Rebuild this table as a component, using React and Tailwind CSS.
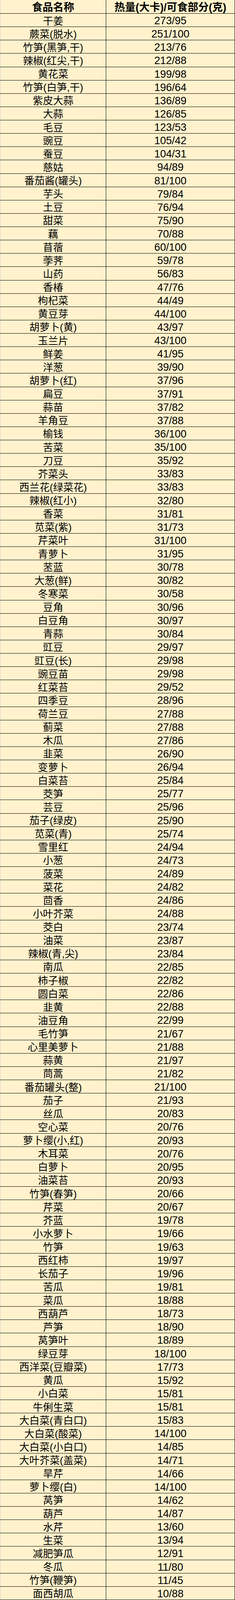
import React from "react";

const rows = [
  ["干姜", "273/95"],
  ["蕨菜(脱水)", "251/100"],
  ["竹笋(黑笋,干)", "213/76"],
  ["辣椒(红尖,干)", "212/88"],
  ["黄花菜", "199/98"],
  ["竹笋(白笋,干)", "196/64"],
  ["紫皮大蒜", "136/89"],
  ["大蒜", "126/85"],
  ["毛豆", "123/53"],
  ["豌豆", "105/42"],
  ["蚕豆", "104/31"],
  ["慈姑", "94/89"],
  ["番茄酱(罐头)", "81/100"],
  ["芋头", "79/84"],
  ["土豆", "76/94"],
  ["甜菜", "75/90"],
  ["藕", "70/88"],
  ["苜蓿", "60/100"],
  ["荸荠", "59/78"],
  ["山药", "56/83"],
  ["香椿", "47/76"],
  ["枸杞菜", "44/49"],
  ["黄豆芽", "44/100"],
  ["胡萝卜(黄)", "43/97"],
  ["玉兰片", "43/100"],
  ["鲜姜", "41/95"],
  ["洋葱", "39/90"],
  ["胡萝卜(红)", "37/96"],
  ["扁豆", "37/91"],
  ["蒜苗", "37/82"],
  ["羊角豆", "37/88"],
  ["榆钱", "36/100"],
  ["苦菜", "35/100"],
  ["刀豆", "35/92"],
  ["芥菜头", "33/83"],
  ["西兰花(绿菜花)", "33/83"],
  ["辣椒(红小)", "32/80"],
  ["香菜", "31/81"],
  ["苋菜(紫)", "31/73"],
  ["芹菜叶", "31/100"],
  ["青萝卜", "31/95"],
  ["苤蓝", "30/78"],
  ["大葱(鲜)", "30/82"],
  ["冬寒菜", "30/58"],
  ["豆角", "30/96"],
  ["白豆角", "30/97"],
  ["青蒜", "30/84"],
  ["豇豆", "29/97"],
  ["豇豆(长)", "29/98"],
  ["豌豆苗", "29/98"],
  ["红菜苔", "29/52"],
  ["四季豆", "28/96"],
  ["荷兰豆", "27/88"],
  ["蓟菜", "27/88"],
  ["木瓜", "27/86"],
  ["韭菜", "26/90"],
  ["变萝卜", "26/94"],
  ["白菜苔", "25/84"],
  ["茭笋", "25/77"],
  ["芸豆", "25/96"],
  ["茄子(绿皮)", "25/90"],
  ["苋菜(青)", "25/74"],
  ["雪里红", "24/94"],
  ["小葱", "24/73"],
  ["菠菜", "24/89"],
  ["菜花", "24/82"],
  ["茴香", "24/86"],
  ["小叶芥菜", "24/88"],
  ["茭白", "23/74"],
  ["油菜", "23/87"],
  ["辣椒(青,尖)", "23/84"],
  ["南瓜", "22/85"],
  ["柿子椒", "22/82"],
  ["圆白菜", "22/86"],
  ["韭黄", "22/88"],
  ["油豆角", "22/99"],
  ["毛竹笋", "21/67"],
  ["心里美萝卜", "21/88"],
  ["蒜黄", "21/97"],
  ["茼蒿", "21/82"],
  ["番茄罐头(整)", "21/100"],
  ["茄子", "21/93"],
  ["丝瓜", "20/83"],
  ["空心菜", "20/76"],
  ["萝卜缨(小,红)", "20/93"],
  ["木耳菜", "20/76"],
  ["白萝卜", "20/95"],
  ["油菜苔", "20/93"],
  ["竹笋(春笋)", "20/66"],
  ["芹菜", "20/67"],
  ["芥蓝", "19/78"],
  ["小水萝卜", "19/66"],
  ["竹笋", "19/63"],
  ["西红柿", "19/97"],
  ["长茄子", "19/96"],
  ["苦瓜", "19/81"],
  ["菜瓜", "18/88"],
  ["西葫芦", "18/73"],
  ["芦笋", "18/90"],
  ["莴笋叶", "18/89"],
  ["绿豆芽", "18/100"],
  ["西洋菜(豆瓣菜)", "17/73"],
  ["黄瓜", "15/92"],
  ["小白菜", "15/81"],
  ["牛俐生菜", "15/81"],
  ["大白菜(青白口)", "15/83"],
  ["大白菜(酸菜)", "14/100"],
  ["大白菜(小白口)", "14/85"],
  ["大叶芥菜(盖菜)", "14/71"],
  ["旱芹", "14/66"],
  ["萝卜缨(白)", "14/100"],
  ["莴笋", "14/62"],
  ["葫芦", "14/87"],
  ["水芹", "13/60"],
  ["生菜", "13/94"],
  ["减肥笋瓜", "12/91"],
  ["冬瓜", "11/80"],
  ["竹笋(鞭笋)", "11/45"],
  ["面西胡瓜", "10/88"],
];

export default function App() {
  return (
    <div
      className="w-[602px] bg-[#fff2cc] text-black"
      style={{ fontFamily: '"Liberation Sans", "Noto Sans CJK SC", sans-serif' }}
    >
      <div className="flex h-[35.05px] border-b border-black">
        <div className="flex w-[272px] items-center justify-center border-l border-r border-l-[#d0d0d0] border-r-black pt-[4px] text-[27px] font-bold leading-none">
          食品名称
        </div>
        <div className="flex flex-1 items-center justify-center border-r border-black pt-[4px] text-[27px] font-bold leading-none whitespace-nowrap">
          热量(大卡)/可食部分(克)
        </div>
      </div>
      {rows.map(([name, val], i) => (
        <div key={i} className="flex h-[34.126px] border-b border-black">
          <div className="flex w-[272px] items-center justify-center border-l border-r border-l-[#d0d0d0] border-r-black pt-[4px] text-[26px] leading-none whitespace-nowrap">
            {name}
          </div>
          <div className="flex flex-1 items-center justify-center border-r border-black pt-[4px] text-[27px] leading-none">
            {val}
          </div>
        </div>
      ))}
    </div>
  );
}
